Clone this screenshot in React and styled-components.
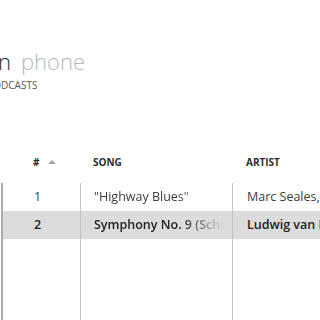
import React from 'react';
import styled, { createGlobalStyle } from 'styled-components';

const GlobalStyle = createGlobalStyle`
  html, body {
    margin: 0;
    padding: 0;
    background: #ffffff;
  }
  body {
    font-family: "Open Sans", "Liberation Sans", sans-serif;
    color: #333333;
  }
`;

const songs = [
  { num: 1, song: '"Highway Blues"', artist: 'Marc Seales, New Stories', selected: false },
  { num: 2, song: 'Symphony No. 9 (Scherzo)', artist: 'Ludwig van Beethoven', selected: true },
];

const App = () => {
  return (
    <>
      <GlobalStyle />
      <Page>
        <Header>
          <Title>
            <Clipped width={11}>collection</Clipped>
            <TitleLight>phone</TitleLight>
          </Title>
          <Subtitle>
            <Clipped width={37.4}>MUSIC VIDEOS PICTURES PODCASTS</Clipped>
          </Subtitle>
        </Header>

        <Table>
          <HeadRow>
            <HeadCell pad={33}>
              # <SortArrow />
            </HeadCell>
            <HeadCell pad={13}>Song</HeadCell>
            <HeadCell pad={14}>Artist</HeadCell>
          </HeadRow>
          <Body>
            {songs.map((s) => (
              <Row key={s.num} selected={s.selected}>
                <Cell pad={31}>{s.num}</Cell>
                <Cell pad={13} divider>
                  <Fade>{s.song}</Fade>
                </Cell>
                <Cell pad={14} divider>{s.artist}</Cell>
              </Row>
            ))}
            <Filler>
              <Cell />
              <Cell divider />
              <Cell divider />
            </Filler>
          </Body>
        </Table>
      </Page>
    </>
  );
};

export default App;

const Page = styled.div`
  width: 320px;
  height: 320px;
  overflow: hidden;
  display: flex;
  flex-direction: column;
`;

const Header = styled.div`
  padding-top: 46px;
  height: 104px;
  box-sizing: border-box;
`;

const Title = styled.div`
  display: flex;
  align-items: baseline;
  font-size: 22px;
  font-weight: 300;
  line-height: 30px;
  color: #2a2a2a;
`;

const Clipped = styled.span`
  display: inline-block;
  width: ${(p) => p.width}px;
  overflow: hidden;
  white-space: nowrap;
  direction: rtl;
`;

const TitleLight = styled.span`
  color: #b8b8b8;
  margin-left: 10px;
`;

const Subtitle = styled.div`
  font-size: 10px;
  line-height: 14px;
  color: #555555;
  margin-top: 2px;
`;

const Table = styled.div`
  flex: 1;
  display: flex;
  flex-direction: column;
`;

const HeadRow = styled.div`
  display: grid;
  grid-template-columns: 80px 152px 1fr;
  align-items: start;
  padding-top: 51px;
  box-sizing: border-box;
  height: 79px;
`;

const HeadCell = styled.div`
  padding-left: ${(p) => p.pad}px;
  font-size: 10px;
  font-weight: 700;
  text-transform: uppercase;
  color: #2e2e2e;
  white-space: nowrap;
  display: flex;
  align-items: center;
  gap: 6px;
`;

const SortArrow = styled.span`
  width: 0;
  height: 0;
  border-left: 4px solid transparent;
  border-right: 4px solid transparent;
  border-bottom: 4px solid #a8a8a8;
  margin-left: 3px;
`;

const Body = styled.div`
  flex: 1;
  display: flex;
  flex-direction: column;
  margin-left: 1px;
  border-left: 2px solid #ababab;
`;

const Row = styled.div`
  display: grid;
  grid-template-columns: 77px 152px 1fr;
  height: 28px;
  align-items: stretch;
  background: ${(p) => (p.selected ? '#dcdcdc' : 'transparent')};
  font-weight: ${(p) => (p.selected ? 600 : 400)};
  color: ${(p) => (p.selected ? '#222222' : '#3c3c3c')};
`;

const Filler = styled(Row)`
  flex: 1;
`;

const Cell = styled.div`
  display: flex;
  align-items: center;
  padding-left: ${(p) => p.pad || 0}px;
  padding-bottom: 2px;
  box-sizing: border-box;
  font-size: 12.5px;
  white-space: nowrap;
  overflow: hidden;
  border-left: ${(p) => (p.divider ? '1px solid #c4c4c4' : 'none')};
`;

const Fade = styled.span`
  display: block;
  width: 130px;
  overflow: hidden;
  -webkit-mask-image: linear-gradient(to right, #000 85px, transparent 130px);
  mask-image: linear-gradient(to right, #000 85px, transparent 130px);
`;
